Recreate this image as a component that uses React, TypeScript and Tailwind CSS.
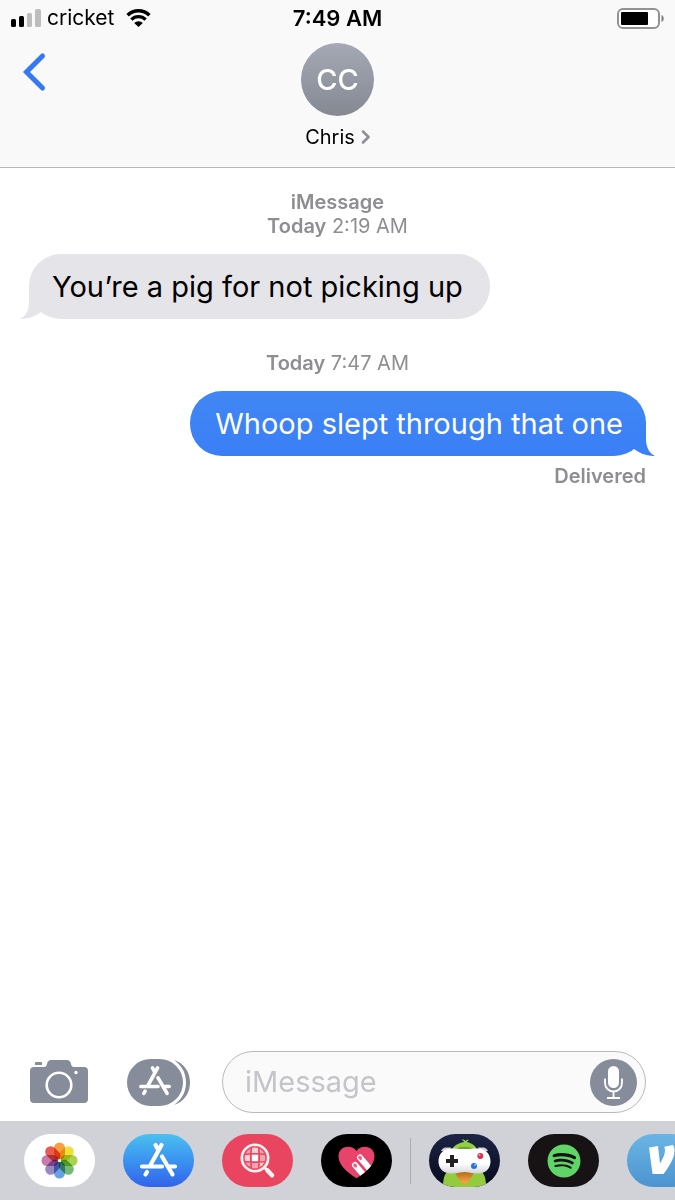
import React, { useState } from "react";
import { FaSpotify } from "react-icons/fa";

interface BubbleProps {
  text: string;
  sent?: boolean;
}

interface StampProps {
  title?: string;
  day: string;
  time: string;
}

interface DrawerAppProps {
  label: string;
  className: string;
  children: React.ReactNode;
}

const PETALS = ["#f6a042", "#efe03a", "#a9d24f", "#74ba74", "#66a3e3", "#9a88c3", "#c67bab", "#e75b50"];

const StatusBar: React.FC = () => (
  <div className="grid h-9 grid-cols-[1fr_auto_1fr] items-center px-[11px] text-black">
    <div className="flex items-center">
      <svg width="30" height="18" viewBox="0 0 30 18" aria-hidden="true">
        <rect x="0" y="10" width="5" height="8" rx="1.5" />
        <rect x="8" y="7" width="5" height="11" rx="1.5" />
        <rect x="16" y="4" width="5" height="14" rx="1.5" fill="#bdbdbf" />
        <rect x="24" y="0" width="6" height="18" rx="1.5" fill="#bdbdbf" />
      </svg>
      <span className="ml-1.5 text-[21px] leading-6">cricket</span>
      <svg className="ml-3" width="25" height="18" viewBox="0 0 25 18" aria-hidden="true">
        <path d="M1.6 6.2a15.6 15.6 0 0 1 21.8 0" fill="none" stroke="#000" strokeWidth="3.5" />
        <path d="M5.4 10.6a10 10 0 0 1 14.2 0" fill="none" stroke="#000" strokeWidth="3.3" />
        <path d="M8.2 14a6 6 0 0 1 8.600 0L12.500 18z" />
      </svg>
    </div>
    <span className="text-[22px] leading-6 font-semibold">7:49 AM</span>
    <svg className="justify-self-end" width="47" height="21" viewBox="0 0 47 21" aria-hidden="true">
      <rect x="1" y="1" width="41" height="19" rx="5" fill="#fff" stroke="#929294" strokeWidth="2" />
      <rect x="4" y="4" width="27" height="13" rx="1" />
      <path d="M44.500 7c3 1 3 6 0 7z" fill="#808082" />
    </svg>
  </div>
);

const Header: React.FC = () => (
  <header className="border-b border-[#b7b7ba] bg-[#f9f9fa]">
    <StatusBar />
    <div className="grid grid-cols-[1fr_auto_1fr] items-start pt-[7px] pb-4">
      <button type="button" aria-label="Back" className="mt-2 ml-5 w-8">
        <svg width="28" height="42" viewBox="0 0 28 42" fill="none" stroke="#3579f0" strokeWidth="5" strokeLinecap="round" strokeLinejoin="miter">
          <path d="M22.500 5 6.500 21l16 16" />
        </svg>
      </button>
      <button type="button" className="flex flex-col items-center">
        <span className="flex size-[73px] items-center justify-center rounded-full bg-linear-to-b from-[#a5a9b5] to-[#858992] text-[29px] font-medium text-white">
          CC
        </span>
        <span className="mt-[7px] flex items-center gap-1.5 text-xl leading-7 text-black">
          Chris
          <svg width="9" height="14" viewBox="0 0 9 14" fill="none" stroke="#8e8e93" strokeWidth="2.500" strokeLinecap="round" strokeLinejoin="round" aria-hidden="true">
            <path d="m2 1.500 5.500 5.500L2 12.500" />
          </svg>
        </span>
      </button>
    </div>
  </header>
);

const Stamp: React.FC<StampProps> = ({ title, day, time }) => (
  <p className="text-center text-xl leading-6 text-[#8e8e92]">
    {title && <span className="block font-semibold">{title}</span>}
    <span className="font-semibold">{day}</span> {time}
  </p>
);

const Bubble: React.FC<BubbleProps> = ({ text, sent = false }) => (
  <div
    className={
      sent
        ? "relative self-end rounded-[32px] bg-linear-to-b from-[#4087f4] to-[#3a7ff6] py-3 pr-[23px] pl-[25px] text-white"
        : "relative self-start rounded-[32px] bg-[#e5e4e9] py-3 pr-[27px] pl-[23px] text-black"
    }
  >
    <p className="text-[29px] leading-[41px]">{text}</p>
    {/* tail, mirrored for sent messages */}
    <svg
      className={sent ? "absolute -right-[9px] bottom-0 -scale-x-100" : "absolute bottom-0 -left-[9px]"}
      width="30"
      height="32"
      viewBox="0 0 30 32"
      aria-hidden="true"
    >
      <defs>
        <linearGradient id="sent-tail" x2="0" y2="1">
          <stop stopColor="#3d83f5" />
          <stop offset="1" stopColor="#3a7ff6" />
        </linearGradient>
      </defs>
      <path d="M9 0v15C9 23 6 29 0 32c8 .3 15-2.500 21-7l4-10V0z" fill={sent ? "url(#sent-tail)" : "#e5e4e9"} />
    </svg>
  </div>
);

const AppStoreGlyph: React.FC = () => (
  <g fill="none" stroke="#fff" strokeWidth="4.200" strokeLinecap="round">
    <path d="M38.500 11 27.500 31" />
    <path d="m32.500 11 2.500 4.500" />
    <path d="M39 22.500 49.500 40.500" />
    <path d="M19 32.500h20M46.500 32.500H52" />
    <path d="m24 38-1.500 2.500" />
  </g>
);

const Composer: React.FC = () => {
  const [draft, setDraft] = useState("");

  return (
    <form className="flex items-center pt-4 pr-[29px] pb-2 pl-[30px]" onSubmit={(e) => e.preventDefault()}>
      <button type="button" aria-label="Camera" className="shrink-0">
        <svg width="58" height="44" viewBox="0 0 58 44" fill="#868c99">
          <rect x="5" y="2" width="7" height="3" rx=".5" />
          <path d="M4 7h10c2 0 2.500-1 3-3 .7-3 2-4 4-4h16c2 0 3.300 1 4 4 .5 2 1 3 3 3h10a4 4 0 0 1 4 4v28a4 4 0 0 1-4 4H4a4 4 0 0 1-4-4V11a4 4 0 0 1 4-4z" />
          <circle cx="29" cy="25" r="12.300" fill="none" stroke="#fff" strokeWidth="2.600" />
          <circle cx="46" cy="12.500" r="1.700" fill="#fff" />
        </svg>
      </button>
      <button type="button" aria-label="Apps" className="ml-[39px] shrink-0">
        <svg width="63" height="47" viewBox="0 0 63 47" fill="#868c99">
          <rect width="56" height="47" rx="23.500" />
          <path d="M47 1c10 3 16 12 16 22.500S57 43 47 46c7-5 12-12 12-22.500S54 6 47 1z" />
          <g transform="translate(-2.500 -.5) scale(.86)">
            <AppStoreGlyph />
          </g>
        </svg>
      </button>
      <div className="ml-8 flex h-[62px] min-w-0 flex-1 items-center rounded-full border border-[#b9b9be] bg-[#fafafa] pr-2 pl-[22px]">
        <input
          type="text"
          aria-label="iMessage"
          placeholder="iMessage"
          value={draft}
          onChange={(e) => setDraft(e.target.value)}
          className="min-w-0 flex-1 bg-transparent text-[29px] leading-10 text-black outline-none placeholder:text-[#c5c5c9]"
        />
        <button type="button" aria-label="Record audio" className="shrink-0">
          <svg width="47" height="47" viewBox="0 0 47 47">
            <circle cx="23.500" cy="23.500" r="23.500" fill="#868c99" />
            <rect x="18" y="7" width="11" height="22" rx="5.500" fill="#fff" />
            <path d="M15 19.500V24a8.500 8.500 0 0 0 17 0v-4.500M23.500 32.500v6M17 39h13" fill="none" stroke="#fff" strokeWidth="1.800" />
          </svg>
        </button>
      </div>
    </form>
  );
};

const DrawerApp: React.FC<DrawerAppProps> = ({ label, className, children }) => (
  <button
    type="button"
    aria-label={label}
    className={`flex h-[53px] w-[71px] shrink-0 items-center justify-center overflow-hidden rounded-full ${className}`}
  >
    {children}
  </button>
);

const PhotosIcon: React.FC = () => (
  <svg width="71" height="53" viewBox="0 0 71 53">
    <g className="isolate">
      {PETALS.map((color, i) => (
        <rect
          key={color}
          x="30"
          y="8.500"
          width="11"
          height="17"
          rx="5.500"
          fill={color}
          className="mix-blend-multiply"
          transform={`rotate(${i * 45} 35.5 26.5)`}
        />
      ))}
    </g>
    <circle cx="35.500" cy="26.500" r="1.500" fill="#fff" />
  </svg>
);

const ImagesIcon: React.FC = () => (
  <svg width="71" height="53" viewBox="0 0 71 53">
    <clipPath id="lens">
      <circle cx="33" cy="24" r="11.300" />
    </clipPath>
    <g clipPath="url(#lens)">
      <rect x="21" y="12" width="24" height="24" fill="#f5a3ad" />
      <path d="M30 12h6v9h-6zM21 21h8v6h-8zM37 27h8v9h-8z" fill="#fbd0d4" />
      <rect x="30" y="21" width="6" height="6" fill="#fff" />
      <path d="M29.500 12q-1.500 12 0 24M36.500 12q1.500 12 0 24M21 20.500q12-1.500 24 0M21 27.500q12 1.500 24 0" fill="none" stroke="#ea4560" strokeWidth="1.600" />
      <circle cx="33" cy="24" r="11" fill="none" stroke="#ea4560" strokeWidth="1.200" />
    </g>
    <circle cx="33" cy="24" r="13.200" fill="none" stroke="#fff3ef" strokeWidth="2.600" />
    <path d="m43 34 2.500 2.500" stroke="#fff3ef" strokeWidth="3" />
    <path d="m45.500 36.500 4.500 4.800" stroke="#fff3ef" strokeWidth="4.500" strokeLinecap="round" />
  </svg>
);

const HeartIcon: React.FC = () => (
  <svg width="71" height="53" viewBox="0 0 71 53">
    <clipPath id="heart">
      <path d="M35.500 17c2-3 5-4.300 8.500-4.300 5.500 0 9.500 4 9.500 9.500C53.500 31 45 38 35.500 44.300 26 38 17.500 31 17.500 22.200c0-5.500 4-9.500 9.500-9.500 3.500 0 6.500 1.300 8.500 4.300z" />
    </clipPath>
    <g clipPath="url(#heart)">
      <rect width="71" height="53" fill="#e8436a" />
      <path d="m39 23.500 12 14M34 31l12 14" stroke="#fff" strokeWidth="6" strokeLinecap="round" />
      <path d="m38.700 23.300.8 1M33.800 31l.8 1" stroke="#ee6688" strokeWidth="3.400" strokeLinecap="round" />
    </g>
  </svg>
);

const PigeonIcon: React.FC = () => (
  <svg width="71" height="53" viewBox="0 0 71 53">
    <defs>
      <linearGradient id="pad" x2="0" y2="1">
        <stop offset=".6" stopColor="#fff" />
        <stop offset="1" stopColor="#d3d5dc" />
      </linearGradient>
      <linearGradient id="beak" x2="0" y2="1">
        <stop stopColor="#b96a1c" />
        <stop offset=".7" stopColor="#f0a040" />
      </linearGradient>
    </defs>
    <path d="M14 53c0-7 1-12 4-15h35c3 3 4 8 4 15z" fill="#92cc3e" />
    <path d="M22 17c2-5 7-8 13-9-.5-1.500-1.500-2-2.500-2.300 2-.4 3.300.2 4 1.300.8-1.300 2.200-1.600 3.800-1-1.300.3-2 .9-2.300 2 5 1 9 4 11 9z" fill="#93cf45" />
    <path d="M27 15c3-3 14-3 17 0z" fill="#6aa52c" />
    <path d="M12 17q1-3 4-3.500h6L20 18zM59 17q-1-3-4-3.500h-6l2 4.500z" fill="#cdd0d8" />
    <path d="M22 14.500c5 0 8 .5 13.500.5s8.500-.5 13.500-.5c7.500 0 12.500 5.500 12.500 12.800S57 39.500 49 39.500c-5 0-8-1-13.500-1s-8.500 1-13.500 1c-8 0-12.500-5-12.500-12.200S14.500 14.500 22 14.500z" fill="url(#pad)" />
    <path d="M26.500 39.500q9-3 18 0-4 8-9 12-5-4-9-12z" fill="url(#beak)" />
    <path d="M23 21v12M17 27h12" stroke="#222" strokeWidth="4" />
    <circle cx="51.300" cy="22" r="3" fill="#d9344a" />
    <circle cx="45" cy="32" r="3" fill="#2c70d8" />
    <circle cx="50.500" cy="21" r=".9" fill="#f6a3ad" />
    <circle cx="46" cy="31" r=".9" fill="#9cc4f8" />
  </svg>
);

const VenmoIcon: React.FC = () => (
  <svg width="71" height="53" viewBox="0 0 71 53" fill="#fff">
    <path d="m22 13.500 9-1.500 2 17.500c3-5 5-9.500 5-13 0-1.500-.3-2.700-.8-3.700L46 11c1 1.600 1.500 3.300 1.500 5.500 0 8-6 17-11 23.500H25.500z" />
  </svg>
);

const AppDrawer: React.FC = () => (
  <nav aria-label="iMessage apps" className="flex gap-7 overflow-hidden bg-[#d1d2d8] py-[13px] pl-6">
    <DrawerApp label="Photos" className="bg-white">
      <PhotosIcon />
    </DrawerApp>
    <DrawerApp label="App Store" className="bg-linear-to-b from-[#4cc0ee] via-[#3b92f0] to-[#3362ea]">
      <svg width="71" height="53" viewBox="0 0 71 53">
        <AppStoreGlyph />
      </svg>
    </DrawerApp>
    <DrawerApp label="#images" className="bg-[#ea4560]">
      <ImagesIcon />
    </DrawerApp>
    <div className="flex shrink-0 items-center gap-[18px]">
      <DrawerApp label="Digital Touch" className="bg-black">
        <HeartIcon />
      </DrawerApp>
      <span className="h-[46px] w-px bg-[#acadb3]" />
      <DrawerApp label="GamePigeon" className="bg-linear-to-b from-[#1d2545] to-[#080b1c]">
        <PigeonIcon />
      </DrawerApp>
    </div>
    <DrawerApp label="Spotify" className="bg-[#171314]">
      <FaSpotify className="size-[34px] text-[#5fd568]" />
    </DrawerApp>
    <DrawerApp label="Venmo" className="bg-linear-to-b from-[#6bb5e5] to-[#4c94d0]">
      <VenmoIcon />
    </DrawerApp>
  </nav>
);

export default function App() {
  return (
    <div className="flex min-h-screen flex-col bg-white font-[Inter,'Liberation_Sans',sans-serif]">
      <Header />
      <main className="flex flex-1 flex-col px-[29px] pt-[22px]">
        <Stamp title="iMessage" day="Today" time="2:19 AM" />
        <div className="mt-4 flex flex-col">
          <Bubble text="You’re a pig for not picking up" />
        </div>
        <div className="mt-8 mb-4">
          <Stamp day="Today" time="7:47 AM" />
        </div>
        <Bubble text="Whoop slept through that one" sent />
        <p className="mt-2 self-end text-xl leading-6 font-semibold text-[#8e8e92]">Delivered</p>
      </main>
      <Composer />
      <AppDrawer />
    </div>
  );
}
